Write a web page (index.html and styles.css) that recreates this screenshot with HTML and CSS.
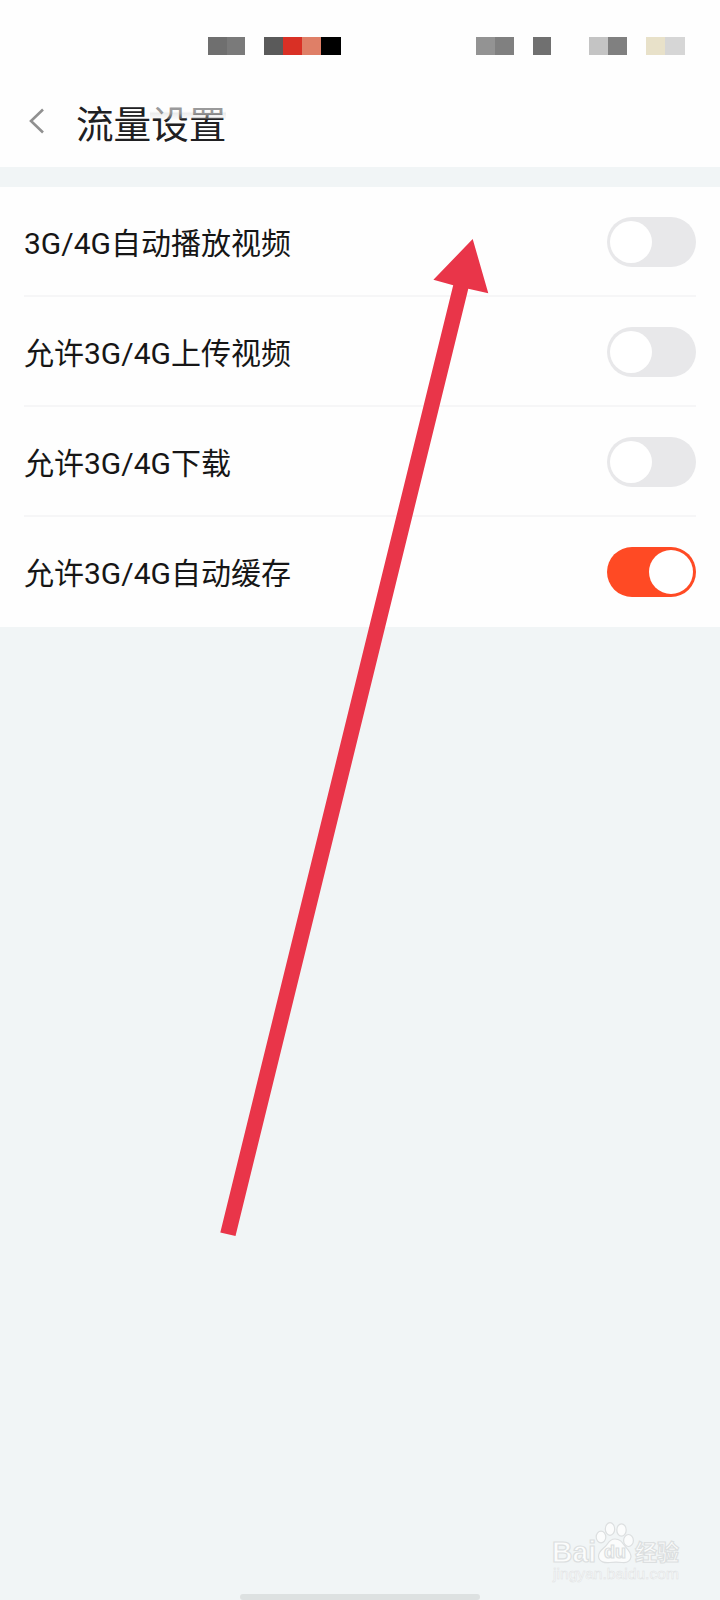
FILE: index.html
```html
<!DOCTYPE html>
<html lang="zh-CN">
<head>
<meta charset="utf-8">
<title>流量设置</title>
<link rel="stylesheet" href="styles.css">
</head>
<body>
<div class="screen">
  <div class="status">
    <div class="blocks"><i class="g1"></i><i class="g2"></i><i class="gap"></i><i class="g3"></i><i class="red"></i><i class="salmon"></i><i class="black"></i></div>
    <div class="blocks"><i class="g4"></i><i class="g5"></i><i class="gap"></i><i class="g6"></i><i class="gap wide"></i><i class="g7"></i><i class="g5"></i><i class="gap"></i><i class="cream"></i><i class="g8"></i></div>
  </div>
  <header class="header">
    <svg class="back" width="16" height="26" viewBox="0 0 16 26"><path d="M14 1.500 2 13 14 24.500" fill="none" stroke="#909090" stroke-width="2.600"/></svg>
    <h1 class="title">流量设置<span class="smudge"></span></h1>
  </header>
  <main class="list">
    <div class="row"><span>3G/4G自动播放视频</span><span class="toggle"></span></div>
    <div class="row"><span>允许3G/4G上传视频</span><span class="toggle"></span></div>
    <div class="row"><span>允许3G/4G下载</span><span class="toggle"></span></div>
    <div class="row"><span>允许3G/4G自动缓存</span><span class="toggle on"></span></div>
  </main>
  <svg class="arrow" width="720" height="1600" viewBox="0 0 720 1600"><path d="M472.7 239 488.3 293.3 468.3 288.8 235.5 1236 220.3 1232.4 453.2 285.2 433.4 279.8Z" fill="#e93549"/></svg>
  <svg class="mark" width="160" height="80" viewBox="0 0 160 80">
    <g fill="#fbfcfc" stroke="#dcdfe0" stroke-width="1.2">
      <text class="brand" x="12" y="51.5" textLength="44" lengthAdjust="spacingAndGlyphs">Bai</text>
      <ellipse cx="61" cy="27" rx="4.8" ry="5.8"/>
      <ellipse cx="70" cy="19" rx="4.7" ry="6.3"/>
      <ellipse cx="81.5" cy="20" rx="4.7" ry="6.2"/>
      <ellipse cx="88.5" cy="30.500" rx="4.9" ry="6"/>
      <path d="M75 29c5 0 7 3 9 6s7 6 7 12c-1 5-5 6-9 5.500-4-.6-8-.6-12 0-5 .7-11-.5-11.500-6-.4-6 6-8 8.500-12 2-3.300 4-5.500 8-5.500Z"/>
      <text class="du" x="64" y="48" textLength="22" lengthAdjust="spacingAndGlyphs">du</text>
      <text class="cn" x="95" y="50">经验</text>
    </g>
    <text class="url" x="13" y="69" textLength="126" lengthAdjust="spacingAndGlyphs">jingyan.baidu.com</text>
  </svg>
  <div class="home"></div>
</div>
</body>
</html>
```
FILE: styles.css
```css
body { margin: 0; }
.screen {
  position: relative;
  width: 720px;
  height: 1600px;
  overflow: hidden;
  display: flex;
  flex-direction: column;
  background: #f1f5f6;
  color: #161616;
  font-family: Roboto, "Noto Sans CJK SC", sans-serif;
}
.status {
  box-sizing: border-box;
  height: 80px;
  padding: 36.6px 35px 0 208px;
  display: flex;
  justify-content: space-between;
  background: #fefefe;
}
.blocks { display: flex; height: 18.6px; }
.blocks i { width: 19px; }
.blocks .gap { width: 19px; }
.blocks .wide { width: 38px; }
.blocks .g4 { width: 20px; }
.g1 { background: #6f6f6f; }
.blocks .g2 { background: #7a7a7a; width: 18px; }
.g3 { background: #5a5a5a; }
.red { background: #d93025; }
.salmon { background: #df7f67; }
.blocks .black { background: #000; width: 20px; }
.g4 { background: #939393; }
.g5 { background: #808080; }
.g6 { background: #707070; }
.g7 { background: #c4c4c4; }
.g8 { background: #d6d6d6; }
.cream { background: #e8e1c9; }
.blocks .g4, .blocks .g5, .blocks .g6 { width: 18.7px; }
.blocks .g8 { width: 20px; }
.header {
  box-sizing: border-box;
  height: 87px;
  padding: 0 29px;
  display: flex;
  align-items: center;
  gap: 31px;
  background: #fefefe;
}
.back { margin-bottom: 6px; }
.title {
  position: relative;
  margin: 2px 0 0;
  font-size: 37.6px;
  line-height: 50px;
  font-weight: 400;
  color: #202022;
}
.smudge {
  position: absolute;
  left: 74px;
  top: 5px;
  width: 76px;
  height: 14px;
  background: linear-gradient(rgba(254,254,254,.55) 0 45%, rgba(225,225,225,.6) 60%, rgba(240,240,240,.2));
}
.list {
  margin-top: 20px;
  padding: 0 24px;
  background: #fefefe;
}
.row {
  box-sizing: border-box;
  height: 110px;
  padding-top: 2px;
  display: flex;
  align-items: center;
  justify-content: space-between;
  font-size: 30px;
  line-height: 42px;
  border-bottom: 2px solid #f6f6f7;
}
.row > span:first-child { padding-top: 3px; }
.row:last-child { border-bottom-color: transparent; }
.toggle {
  box-sizing: border-box;
  width: 89px;
  height: 50px;
  padding: 4px 3px;
  margin-right: .5px;
  display: flex;
  border-radius: 25px;
  background: #e8e8ea;
}
.toggle::before {
  content: "";
  width: 42px;
  height: 42px;
  border-radius: 50%;
  background: #fff;
}
.toggle.on {
  padding: 3px;
  justify-content: flex-end;
  background: #ff4a24;
}
.toggle.on::before { width: 44px; height: 44px; }
.arrow { position: absolute; left: 0; top: 0; }
.mark { position: absolute; left: 540px; top: 1510px; }
.brand { font: 700 29px "Liberation Sans", sans-serif; }
.du { font: 700 18px "Liberation Sans", sans-serif; }
.cn { font: 700 22px "Noto Sans CJK SC", sans-serif; }
.url { font: 15px "Liberation Sans", sans-serif; fill: #fafbfb; stroke: #dfe2e3; stroke-width: .5; }
.home {
  width: 240px;
  height: 6px;
  margin: auto auto 0;
  border-radius: 3px;
  background: #dde1e1;
}
```
